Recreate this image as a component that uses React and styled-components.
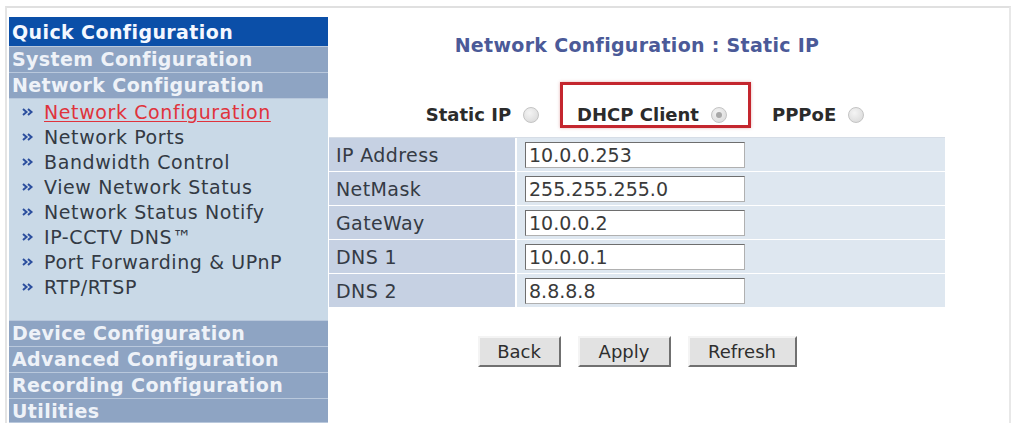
import React from 'react';
import styled, { createGlobalStyle } from 'styled-components';

const GlobalStyle = createGlobalStyle`
  html, body {
    margin: 0;
    padding: 0;
    background: #ffffff;
  }
  body {
    font-family: "DejaVu Sans", Verdana, sans-serif;
  }
`;

const Frame = styled.div`
  margin: 6px 0 0 5px;
  width: 1006px;
  height: 417px;
  border-top: 2px solid #e0e0e0;
  border-left: 2px solid #e4e4e4;
  border-right: 2px solid #e8e8e8;
  box-sizing: border-box;
  display: flex;
  align-items: flex-start;
  padding: 9px 0 0 2px;
`;

const Sidebar = styled.nav`
  width: 319px;
  height: 406px;
  overflow: hidden;
  display: flex;
  flex-direction: column;
  flex-shrink: 0;
`;

const MenuHeader = styled.div`
  height: ${(p) => (p.$short ? 23 : 25)}px;
  flex-shrink: 0;
  background: ${(p) => (p.$active ? '#0b4fa8' : '#8ea4c3')};
  color: ${(p) => (p.$active ? '#f4f8ff' : '#eef2f8')};
  font-weight: bold;
  font-size: 19px;
  letter-spacing: 0.4px;
  line-height: 25px;
  padding: ${(p) => (p.$active ? '3px 0 1px 3px' : '0 0 0 3px')};
  border-bottom: 1px solid #b9c8dc;
  white-space: nowrap;
  overflow: hidden;
`;

const SubMenu = styled.div`
  background: #c9d9e7;
  padding: 0 0 21px 0;
  display: flex;
  flex-direction: column;
  border-bottom: 1px solid #b9c8dc;
`;

const SubItem = styled.a`
  height: 25px;
  display: flex;
  align-items: center;
  gap: 10px;
  padding-left: 13px;
  font-size: 19px;
  letter-spacing: 0.6px;
  color: ${(p) => (p.$current ? '#e0333c' : '#333a44')};
  text-decoration: ${(p) => (p.$current ? 'underline' : 'none')};
  text-decoration-thickness: 1px;
  text-underline-offset: 2px;
  white-space: nowrap;
`;

const Chevron = () => (
  <svg width="12" height="10" viewBox="0 0 12 10">
    <path d="M1 2 L4.5 5 L1 8 M6 2 L9.5 5 L6 8" fill="none" stroke="#2c4f9e" strokeWidth="2" />
  </svg>
);

const Content = styled.main`
  width: 616px;
  margin-left: 1px;
  display: flex;
  flex-direction: column;
  align-items: center;
`;

const Title = styled.h1`
  margin: 16px 0 0 0;
  font-size: 19px;
  letter-spacing: 0.3px;
  font-weight: bold;
  color: #4b5a98;
  line-height: 24px;
`;

const RadioRow = styled.div`
  display: flex;
  align-items: flex-end;
  margin: 25px 0 0 16px;
  gap: 18px;
`;

const RadioItem = styled.label`
  display: flex;
  align-items: center;
  gap: 12px;
  font-size: 18px;
  line-height: 20px;
  font-weight: bold;
  color: #2b2b2b;
  border: 3px solid ${(p) => (p.$marked ? '#c4262e' : 'transparent')};
  padding: ${(p) => (p.$marked ? '20px 21px 0 14px' : '0')};
  box-shadow: ${(p) => (p.$marked ? '0 0 3px rgba(180, 40, 40, 0.35)' : 'none')};
`;

const Radio = styled.span`
  width: 14px;
  height: 14px;
  border-radius: 50%;
  border: 1px solid #c4c4c4;
  background: radial-gradient(circle at 40% 35%, #f4f4f4, #d6d6d6);
  display: inline-flex;
  align-items: center;
  justify-content: center;
  &::after {
    content: '';
    width: 6px;
    height: 6px;
    border-radius: 50%;
    background: ${(p) => (p.$checked ? '#a8a8a8' : 'transparent')};
  }
`;

const Table = styled.div`
  width: 616px;
  margin-top: 9px;
  display: flex;
  flex-direction: column;
  gap: 1px;
  background: #ffffff;
  border-top: 1px solid #d6dde6;
`;

const Row = styled.div`
  display: grid;
  grid-template-columns: 188px 1fr;
  height: 33px;
`;

const LabelCell = styled.div`
  background: #c6d1e3;
  display: flex;
  align-items: center;
  padding-left: 7px;
  font-size: 19px;
  letter-spacing: 0.4px;
  color: #353b45;
  border-right: 2px solid #ffffff;
`;

const ValueCell = styled.div`
  background: #dee7f0;
  display: flex;
  align-items: center;
  padding-left: 8px;
`;

const Field = styled.input`
  width: 220px;
  height: 26px;
  box-sizing: border-box;
  border: 1px solid #8a8a8a;
  border-top-color: #6e6e6e;
  border-left-color: #6e6e6e;
  border-bottom-color: #b0b0b0;
  border-right-color: #b0b0b0;
  background: #ffffff;
  font-family: "DejaVu Sans", Verdana, sans-serif;
  font-size: 19px;
  color: #3a3a3a;
  padding: 0 3px;
  outline: none;
`;

const ButtonRow = styled.div`
  display: flex;
  gap: 17px;
  margin-top: 29px;
`;

const Button = styled.button`
  height: 31px;
  width: ${(p) => p.$w}px;
  background: #e2e2e2;
  border: 2px solid;
  border-color: #f4f4f4 #707070 #707070 #f4f4f4;
  font-family: "DejaVu Sans", Verdana, sans-serif;
  font-size: 18px;
  color: #2e2e2e;
`;

const rows = [
  ['IP Address', '10.0.0.253'],
  ['NetMask', '255.255.255.0'],
  ['GateWay', '10.0.0.2'],
  ['DNS 1', '10.0.0.1'],
  ['DNS 2', '8.8.8.8'],
];

const subItems = [
  'Network Configuration',
  'Network Ports',
  'Bandwidth Control',
  'View Network Status',
  'Network Status Notify',
  'IP-CCTV DNS\u2122',
  'Port Forwarding & UPnP',
  'RTP/RTSP',
];

export default function App() {
  return (
    <>
      <GlobalStyle />
      <Frame>
        <Sidebar>
          <MenuHeader $active>Quick Configuration</MenuHeader>
          <MenuHeader>System Configuration</MenuHeader>
          <MenuHeader>Network Configuration</MenuHeader>
          <SubMenu>
            {subItems.map((item, i) => (
              <SubItem key={item} $current={i === 0}>
                <Chevron />
                <span>{item}</span>
              </SubItem>
            ))}
          </SubMenu>
          <MenuHeader>Device Configuration</MenuHeader>
          <MenuHeader>Advanced Configuration</MenuHeader>
          <MenuHeader>Recording Configuration</MenuHeader>
          <MenuHeader $short>Utilities</MenuHeader>
        </Sidebar>
        <Content>
          <Title>Network Configuration : Static IP</Title>
          <RadioRow>
            <RadioItem>
              Static IP <Radio />
            </RadioItem>
            <RadioItem $marked>
              DHCP Client <Radio $checked />
            </RadioItem>
            <RadioItem>
              PPPoE <Radio />
            </RadioItem>
          </RadioRow>
          <Table>
            {rows.map(([label, value]) => (
              <Row key={label}>
                <LabelCell>{label}</LabelCell>
                <ValueCell>
                  <Field defaultValue={value} />
                </ValueCell>
              </Row>
            ))}
          </Table>
          <ButtonRow>
            <Button $w={83}>Back</Button>
            <Button $w={93}>Apply</Button>
            <Button $w={109}>Refresh</Button>
          </ButtonRow>
        </Content>
      </Frame>
    </>
  );
}
